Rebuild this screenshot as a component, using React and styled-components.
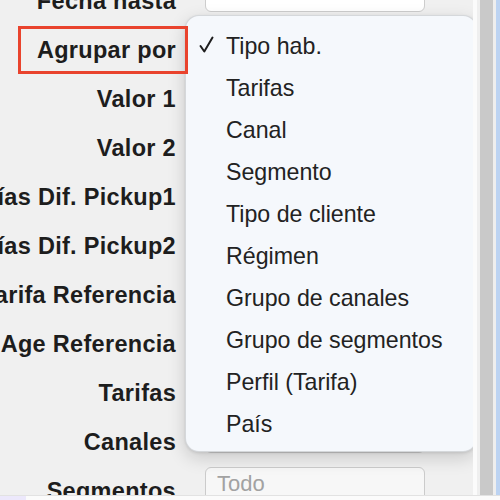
import React from "react";
import styled, { createGlobalStyle } from "styled-components";

const GlobalStyle = createGlobalStyle`
  html, body { margin: 0; padding: 0; background: #f0f0f0; overflow: hidden; }
  * { box-sizing: border-box; }
`;

const Page = styled.div`
  width: 500px;
  height: 500px;
  display: flex;
  flex-direction: column;
  overflow: hidden;
  font-family: "Liberation Sans", Arial, sans-serif;
`;

const Top = styled.div`
  flex: 1;
  display: flex;
  min-height: 0;
`;

const Content = styled.div`
  position: relative;
  flex: 1;
  overflow: hidden;
  background: #f0f0f0;
`;

const EdgeStrip = styled.div`
  width: ${(p) => p.$w}px;
  background: ${(p) => p.$c};
`;

const BottomBar = styled.div`
  height: 5px;
  display: flex;
  background: #fbfbfb;
  border-top: 1px solid #e2e2e2;
`;

const BottomTint = styled.div`
  width: 26px;
  background: #ece8fb;
`;

const Form = styled.div`
  display: grid;
  grid-template-columns: 176px 220px;
  grid-auto-rows: minmax(49px, auto);
  column-gap: 29px;
  margin-top: -23.5px;
`;

const Label = styled.div`
  display: flex;
  justify-content: flex-end;
  align-self: start;
  height: 49px;
  line-height: 49px;
  font-size: 23.5px;
  letter-spacing: 0.3px;
  font-weight: 700;
  color: #1d1d1d;
  white-space: nowrap;
`;

const Field = styled.div`
  height: 32px;
  margin-top: 3px;
  align-self: start;
  background: #ffffff;
  border: 1px solid #cdcdcd;
  border-radius: 6px;
`;

const TextArea = styled.textarea`
  width: 220px;
  height: 70px;
  align-self: start;
  margin: 0;
  padding: 3px 11px;
  font-family: "Liberation Sans", Arial, sans-serif;
  font-size: 22px;
  color: #333;
  background: #f7f7f7;
  border: 1px solid #cbcbcb;
  border-radius: 6px;
  outline: none;
  &::placeholder { color: #a2a2a2; }
`;

const Highlight = styled.div`
  position: absolute;
  left: 18px;
  top: 26px;
  width: 170px;
  height: 48px;
  border: 3px solid #e9432d;
  z-index: 3;
  pointer-events: none;
`;

const Menu = styled.div`
  position: absolute;
  left: 185px;
  top: 15px;
  width: 292px;
  height: 437px;
  padding: 9px 0 8px;
  background: #f5f8fc;
  border: 1px solid rgba(0, 0, 0, 0.13);
  border-radius: 14px;
  box-shadow: 0 6px 18px rgba(0, 0, 0, 0.16), 0 1px 3px rgba(0, 0, 0, 0.1);
  z-index: 2;
`;

const Item = styled.div`
  position: relative;
  height: 42px;
  line-height: 42px;
  padding-left: 40px;
  font-size: 23.2px;
  color: #222222;
  white-space: nowrap;
`;

const Check = styled.svg`
  position: absolute;
  left: 13px;
  top: 11px;
  width: 15px;
  height: 17px;
`;

const labels = [
  "Fecha hasta",
  "Agrupar por",
  "Valor 1",
  "Valor 2",
  "Días Dif. Pickup1",
  "Días Dif. Pickup2",
  "Tarifa Referencia",
  "Age Referencia",
  "Tarifas",
  "Canales",
];

const options = [
  "Tipo hab.",
  "Tarifas",
  "Canal",
  "Segmento",
  "Tipo de cliente",
  "Régimen",
  "Grupo de canales",
  "Grupo de segmentos",
  "Perfil (Tarifa)",
  "País",
];

export default function App() {
  return (
    <>
      <GlobalStyle />
      <Page>
        <Top>
          <Content>
            <Form>
              {labels.map((l) => (
                <React.Fragment key={l}>
                  <Label>{l}</Label>
                  <Field />
                </React.Fragment>
              ))}
              <Label>Segmentos</Label>
              <TextArea placeholder="Todo" readOnly />
            </Form>
            <Highlight />
            <Menu>
              {options.map((o, i) => (
                <Item key={o}>
                  {i === 0 && (
                    <Check viewBox="0 0 15 17">
                      <path
                        d="M1.5 10 L5.3 15.5 L13.5 1.5"
                        fill="none"
                        stroke="#1e1e1e"
                        strokeWidth="2"
                        strokeLinecap="round"
                        strokeLinejoin="round"
                      />
                    </Check>
                  )}
                  {o}
                </Item>
              ))}
            </Menu>
          </Content>
          <EdgeStrip $w={4} $c="#fbfbfb" />
          <EdgeStrip $w={3} $c="#efefef" />
          <EdgeStrip $w={13} $c="#c9c9c9" />
          <EdgeStrip $w={3} $c="#eeeeee" />
          <EdgeStrip $w={4} $c="#bcd3f2" />
        </Top>
        <BottomBar>
          <BottomTint />
        </BottomBar>
      </Page>
    </>
  );
}
